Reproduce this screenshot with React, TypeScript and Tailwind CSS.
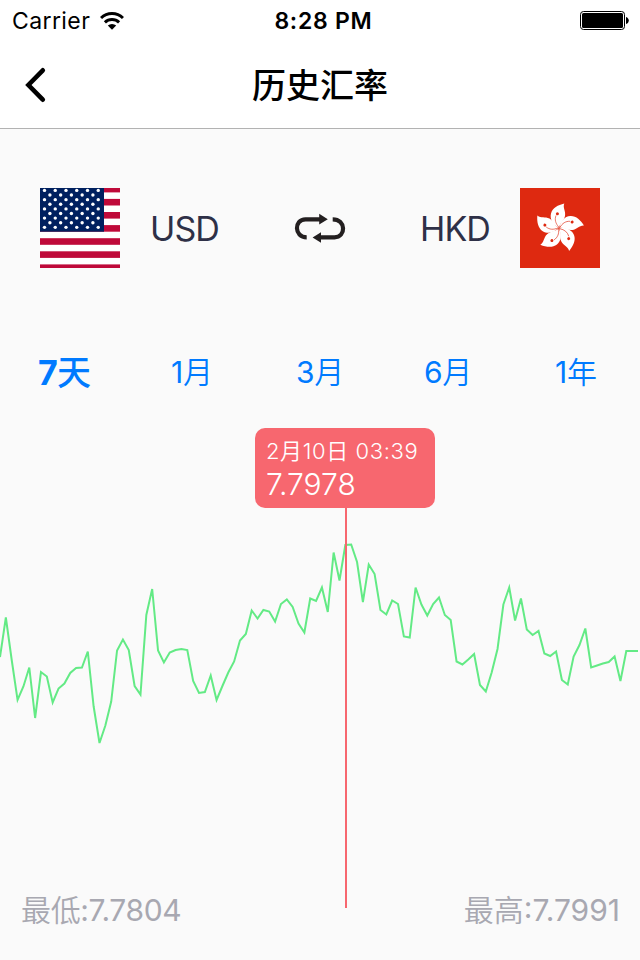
import type { ReactNode } from "react"

const rates = [
  657, 617.5, 660, 700, 686.5, 667.5, 718, 672, 676.5, 702.5, 688.5, 683.5, 673, 668, 667.5, 651.5, 706.5, 743, 725.5,
  701.5, 650.5, 639.5, 650, 686, 694.5, 615, 589, 650.5, 662.5, 652.5, 650, 649, 650, 681, 693, 692, 675.5, 700, 686,
  672.5, 661.5, 640.5, 634, 610.5, 618.5, 610, 611.5, 621.5, 604, 599.5, 607, 623.5, 632.5, 598.5, 601, 587.5, 612,
  552.5, 580.5, 545, 544.5, 562, 602, 564.5, 574, 610, 614.5, 600.5, 604, 636.5, 637.5, 587.5, 604.5, 615.5, 604, 597.5,
  615, 620, 661.5, 664.5, 659.5, 654, 685, 691.5, 672.5, 649, 604.5, 587.5, 620.5, 598.5, 629.5, 635, 631, 653.5, 656,
  651.5, 680, 684.5, 656.5, 645, 628.5, 667.5, 665.5, 663.5, 662, 656.5, 681, 651, 651, 651,
]

const CHART_TOP = 508

function StatusBar() {
  return (
    <div className="grid h-10 grid-cols-3 items-center pt-px pr-[11px] pl-3 text-[23px] leading-10">
      <div className="flex items-center gap-2.5">
        <span className="tracking-[0.4px]">Carrier</span>
        <svg width="24" height="18" viewBox="0 0 24 18" fill="none" stroke="#000" strokeWidth="3">
          <path d="M1 6a15.8 15.8 0 0 1 22 0" />
          <path d="M4.9 10.4a10.2 10.2 0 0 1 14.2 0" />
          <path d="M7.8 13.6a6 6 0 0 1 8.4 0L12 17.8z" fill="#000" stroke="none" />
        </svg>
      </div>
      <div className="pl-1.5 text-center font-semibold tracking-[0.75px] whitespace-nowrap">8:28 PM</div>
      <svg className="mb-0.5 justify-self-end" width="49" height="19" viewBox="0 0 49 19">
        <rect x="0.5" y="0.5" width="44" height="18" rx="3" fill="none" stroke="#000" />
        <rect x="2" y="2" width="41" height="15" rx="1.5" />
        <path d="M46 6c3.7 1 3.7 6 0 7z" />
      </svg>
    </div>
  )
}

function Header() {
  return (
    <header className="border-b border-[#b2b2b2] bg-white">
      <StatusBar />
      <div className="grid h-[88px] grid-cols-3 items-center">
        <svg className="mt-0.5 ml-6" width="24" height="36" viewBox="0 0 24 36" fill="none" stroke="#000" strokeWidth="4.6">
          <path d="M18.8 3.3L4.4 18L18.8 32.7" strokeLinecap="round" />
        </svg>
        <h1 className="pt-0.5 text-center text-[34px] font-medium">历史汇率</h1>
      </div>
    </header>
  )
}

function UsFlag() {
  const stars: ReactNode[] = []
  for (let row = 0; row < 9; row++) {
    const odd = row % 2 === 1
    for (let col = 0; col < (odd ? 5 : 6); col++) {
      const x = (odd ? 9.9 : 4.5) + col * 10.75
      stars.push(<circle key={`${row}-${col}`} cx={x} cy={2.4 + row * 4.62} r="1.7" />)
    }
  }
  return (
    <svg width="80" height="80" viewBox="0 0 80 80">
      <rect width="80" height="80" fill="#fff" />
      {[0, 1, 2, 3, 4, 5, 6].map((i) => (
        <rect key={i} y={-2.2 + i * 13.1} width="80" height="6.6" fill="#bf0a3a" />
      ))}
      <rect width="64" height="43.7" fill="#00205f" />
      <g fill="#fff">{stars}</g>
    </svg>
  )
}

function HkFlag() {
  return (
    <svg width="80" height="80" viewBox="0 0 80 80">
      <rect width="80" height="80" fill="#de2910" />
      {[0, 72, 144, 216, 288].map((angle) => (
        <g key={angle} transform={`rotate(${angle} 39 40)`}>
          <path
            d="M39 39.5C33 37 29.5 31 31 25.5C32.5 20 38 17 44.3 15.5C42.5 20 46 23 45 28C44.2 32.5 40 35 39 39.5Z"
            fill="#fff"
          />
          <path d="M38.8 39C35.5 35.5 34.5 31.5 36 27.5" fill="none" stroke="#de2910" strokeWidth="0.6" />
          <circle cx="37.4" cy="25.7" r="1.5" fill="#de2910" />
        </g>
      ))}
    </svg>
  )
}

function SwapIcon() {
  return (
    <svg width="52" height="30" viewBox="0 0 52 30" fill="none" stroke="#231f20" strokeWidth="4.2">
      <path d="M12.7 24.3C-0.1 24.3 -0.1 6.3 11.5 6.3H27" />
      <path d="M38.7 6.3C52.2 6.3 52.2 24.3 40.5 24.3H25" />
      <path d="M25.2 0.8L33.8 6.2L25.2 11.4zM27 19.2L18.6 24.4L27 29.7z" fill="#231f20" stroke="none" />
    </svg>
  )
}

function CurrencyPair() {
  return (
    <section className="flex h-20 items-center justify-between px-10 text-[34px] text-[#2e3047]">
      <div className="flex items-center gap-[30px]">
        <UsFlag />
        <span className="w-[75px] tracking-[-0.9px]">USD</span>
      </div>
      <SwapIcon />
      <div className="flex items-center gap-[30px]">
        <span className="w-[75px] text-right tracking-[-0.9px]">HKD</span>
        <HkFlag />
      </div>
    </section>
  )
}

function RangeTabs() {
  return (
    <nav className="mt-[72px] grid h-16 grid-cols-5 items-center text-center text-[30px] tracking-[-0.2px] text-[#007aff]">
      <button className="text-[34px] font-bold tracking-[-0.8px]">
        7<span className="font-medium">天</span>
      </button>
      <button>
        1<span className="font-[350]">月</span>
      </button>
      <button>
        3<span className="font-[350]">月</span>
      </button>
      <button>
        6<span className="font-[350]">月</span>
      </button>
      <button>
        1<span className="font-[350]">年</span>
      </button>
    </nav>
  )
}

function RateChart() {
  const step = 638 / (rates.length - 1)
  const points = rates.map((y, i) => `${(i * step).toFixed(2)},${y - CHART_TOP}`).join(" ")
  return (
    <section className="mt-6">
      <div className="ml-[255px] h-20 w-[180px] rounded-[10px] bg-[#f7676f] px-[11px] pt-[9px] font-[350] text-white">
        <div className="text-[22px] leading-7 tracking-[0.6px] whitespace-nowrap">2月10日 03:39</div>
        <div className="text-[30px] leading-[38px]">7.7978</div>
      </div>
      <svg className="block" width="640" height="400" viewBox="0 0 640 400" fill="none">
        <polyline points={points} stroke="#63ea85" strokeWidth="2" />
        <path d="M346 0V400" stroke="#f7676f" strokeWidth="2" />
      </svg>
    </section>
  )
}

export default function App() {
  return (
    <main className="h-[960px] w-[640px] overflow-hidden bg-[#fafafa] font-['Inter','Noto_Sans_CJK_SC',sans-serif] text-black">
      <Header />
      <div className="pt-[59px]">
        <CurrencyPair />
        <RangeTabs />
        <RateChart />
      </div>
      <footer className="-mt-5 flex justify-between pr-5 pl-[21px] text-[30px] leading-[44px] text-[#a8a8b1]">
        <span className="tracking-[-0.35px]">
          <span className="font-[350]">最低</span>:7.7804
        </span>
        <span>
          <span className="font-[350]">最高</span>:7.7991
        </span>
      </footer>
    </main>
  )
}
